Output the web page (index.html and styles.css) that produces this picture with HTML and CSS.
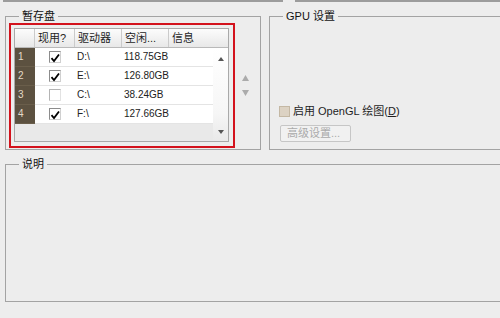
FILE: index.html
```html
<!DOCTYPE html>
<html lang="zh-CN">

<head>
    <meta charset="utf-8">
    <title>性能 - 暂存盘</title>
    <link rel="stylesheet" href="styles.css">
</head>

<body>
    <div class="tabs"><span></span><span></span></div>

    <div class="top">
        <fieldset class="group scratch">
            <legend>暂存盘</legend>
            <div class="mark">
                <div class="grid">
                    <div class="cols head">
                        <div class="hc"></div>
                        <div class="hc">现用?</div>
                        <div class="hc">驱动器</div>
                        <div class="hc">空闲...</div>
                        <div class="hc last">信息</div>
                    </div>
                    <div class="body">
                        <div class="rows">
                            <div class="cols row">
                                <div class="num">1</div>
                                <div class="cell on"><span class="chk"><svg viewBox="0 0 12 12"><path d="M2.5 6.2 L5 9 L10 2.5" /></svg></span></div>
                                <div class="cell">D:\</div>
                                <div class="cell">118.75GB</div>
                                <div class="cell"></div>
                            </div>
                            <div class="cols row">
                                <div class="num">2</div>
                                <div class="cell on"><span class="chk"><svg viewBox="0 0 12 12"><path d="M2.5 6.2 L5 9 L10 2.5" /></svg></span></div>
                                <div class="cell">E:\</div>
                                <div class="cell">126.80GB</div>
                                <div class="cell"></div>
                            </div>
                            <div class="cols row">
                                <div class="num">3</div>
                                <div class="cell on"><span class="chk off"></span></div>
                                <div class="cell">C:\</div>
                                <div class="cell">38.24GB</div>
                                <div class="cell"></div>
                            </div>
                            <div class="cols row">
                                <div class="num">4</div>
                                <div class="cell on"><span class="chk"><svg viewBox="0 0 12 12"><path d="M2.5 6.2 L5 9 L10 2.5" /></svg></span></div>
                                <div class="cell">F:\</div>
                                <div class="cell">127.66GB</div>
                                <div class="cell"></div>
                            </div>
                            <div class="filler"></div>
                        </div>
                        <div class="scroll">
                            <svg class="arr" viewBox="0 0 6 4"><path d="M0 4 L3 0 L6 4 Z" /></svg>
                            <svg class="arr" viewBox="0 0 6 4"><path d="M0 0 L6 0 L3 4 Z" /></svg>
                        </div>
                    </div>
                </div>
            </div>
            <div class="spin">
                <svg viewBox="0 0 7 6"><path d="M0 6 L3.5 0 L7 6 Z" /></svg>
                <svg viewBox="0 0 7 6"><path d="M0 0 L7 0 L3.5 6 Z" /></svg>
            </div>
        </fieldset>

        <fieldset class="group gpu">
            <legend>GPU 设置</legend>
            <label class="opt"><span class="box"></span><span>启用 OpenGL 绘图(<u>D</u>)</span></label>
            <button class="adv" disabled>高级设置...</button>
        </fieldset>
    </div>

    <fieldset class="group desc">
        <legend>说明</legend>
    </fieldset>
</body>

</html>
```

FILE: styles.css
```css
body {
    margin: 0;
    width: 500px;
    height: 318px;
    overflow: hidden;
    background-color: #ededed;
    font-family: "Liberation Sans", "Noto Sans CJK SC", sans-serif;
    font-size: 11px;
    color: #1a1a1a;
}

.tabs {
    display: flex;
    gap: 12px;
    height: 3px;
    padding-left: 3px;
}

.tabs span {
    height: 2px;
    background-color: #9c9c9c;
}

.tabs span:first-child {
    width: 280px;
}

.tabs span:last-child {
    flex: 1;
}

.top {
    display: flex;
    gap: 8px;
    margin: 6px 0 0 5px;
}

.group {
    margin: 0;
    padding: 0;
    border: 1px solid #a3a3a3;
    box-sizing: border-box;
    min-width: 0;
}

legend {
    margin-left: 13px;
    padding: 0 3px;
    line-height: 15px;
    font-size: 11px;
    color: #111;
}

/* 暂存盘 */
.scratch {
    flex: 0 0 256px;
    height: 141px;
    display: flex;
    align-items: flex-start;
}

.mark {
    width: 226px;
    height: 125px;
    box-sizing: border-box;
    border: 2px solid #d3121c;
    padding: 3px 4px 4px 3px;
    margin: -1px 0 0 3px;
}

.grid {
    height: 114px;
    box-sizing: border-box;
    border: 1px solid #a9a9a9;
    background-color: #e9e9e9;
    display: flex;
    flex-direction: column;
}

.cols {
    display: grid;
    grid-template-columns: 20px 40px 47px 47px 1fr;
}

.head {
    height: 19px;
    box-sizing: border-box;
    background: linear-gradient(#fcfcfc, #e8e8e8);
    border-bottom: 1px solid #b9b9b9;
}

.hc {
    border-right: 1px solid #cbcbcb;
    padding-left: 3px;
    line-height: 18px;
    color: #1e1e1e;
}

.hc.last {
    border-right: none;
}

.body {
    flex: 1;
    display: flex;
}

.rows {
    flex: 1;
    display: flex;
    flex-direction: column;
}

.row {
    height: 19px;
}

.num {
    background-color: #5c5140;
    color: #e4dac8;
    padding-left: 3px;
    line-height: 18px;
    font-size: 10px;
    border-bottom: 1px solid #6a5e4b;
}

.cell {
    background-color: #fff;
    border-bottom: 1px solid #e4e4e4;
    padding-left: 2px;
    line-height: 18px;
    font-size: 10px;
    color: #222;
}

.cell.on {
    display: flex;
    align-items: center;
    justify-content: center;
    padding-left: 0;
}

.chk {
    width: 12px;
    height: 12px;
    box-sizing: border-box;
    border: 1px solid #8c8c8c;
    border-right-color: #d0d0d0;
    border-bottom-color: #d0d0d0;
    background-color: #fff;
    display: flex;
}

.chk.off {
    border-color: #b4b4b4 #e2e2e2 #e2e2e2 #b4b4b4;
}

.chk svg {
    width: 12px;
    height: 12px;
    margin: 0 0 0 -1px;
    overflow: visible;
}

.chk path {
    fill: none;
    stroke: #000;
    stroke-width: 1.8;
}

.filler {
    flex: 1;
}

.scroll {
    width: 15px;
    background: linear-gradient(#ffffff, #f6f6f6 70%, #e9e9e9);
    display: flex;
    flex-direction: column;
    justify-content: space-between;
    align-items: center;
    padding: 9px 0 7px;
}

.arr {
    width: 6px;
    height: 4px;
    fill: #555;
}

.spin {
    display: flex;
    flex-direction: column;
    gap: 9px;
    margin: 51px 0 0 7px;
}

.spin svg {
    width: 7px;
    height: 6px;
    fill: #ababab;
}

/* GPU 设置 */
.gpu {
    flex: 0 0 245px;
    height: 141px;
    display: flex;
    flex-direction: column;
    justify-content: flex-end;
    align-items: flex-start;
    padding-bottom: 7px;
}

.opt {
    display: flex;
    align-items: center;
    gap: 3px;
    line-height: 15px;
    margin: 0 0 6px 9px;
    color: #1e1e1e;
}

.box {
    width: 11px;
    height: 11px;
    box-sizing: border-box;
    border: 1px solid #c4b8a4;
    background-color: #dcd2c3;
}

.adv {
    width: 71px;
    height: 17px;
    margin: 0 0 0 10px;
    padding: 0 0 0 6px;
    border: 1px solid #c6c6c6;
    border-radius: 2px;
    background-color: #f1f1f1;
    color: #aaaaaa;
    font-family: inherit;
    font-size: 11px;
    line-height: 15px;
    text-align: left;
}

/* 说明 */
.desc {
    margin: 7px 0 0 5px;
    width: 520px;
    height: 145px;
}
```
